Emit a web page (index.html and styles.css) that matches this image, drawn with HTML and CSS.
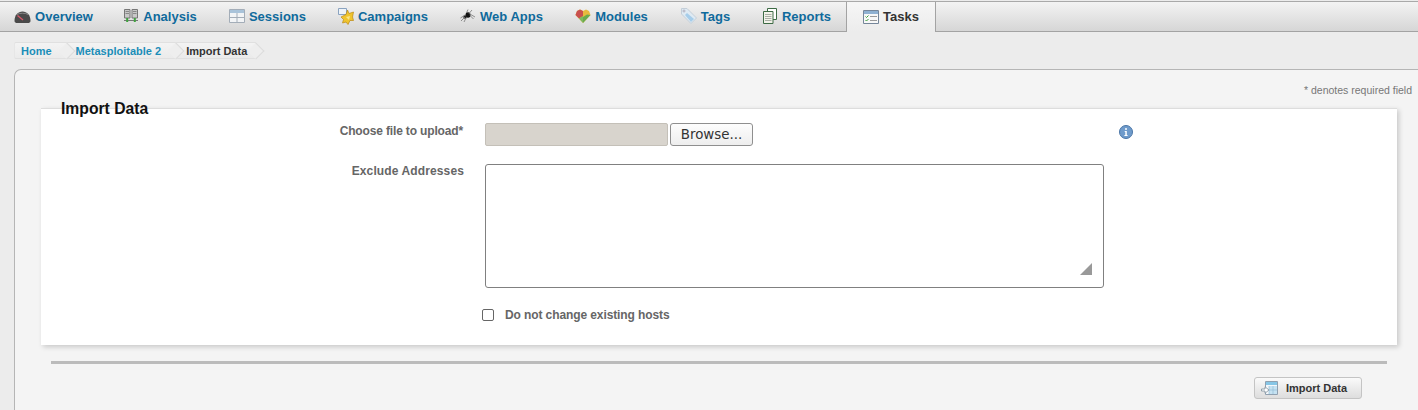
FILE: index.html
```html
<!DOCTYPE html>
<html lang="en">
<head>
    <meta charset="UTF-8">
    <meta name="viewport" content="width=device-width, initial-scale=1.0">
    <title>Import Data</title>

    <link rel="stylesheet" href="styles.css">
</head>
<body>
    <nav id="tabs">
        <a class="tab" style="width:107px"><svg width="17" height="16" viewBox="0 0 17 16"><path d="M0.500 13 C0.500 7 4 3.500 8.500 3.500 S16.500 7 16.500 13 C16.500 14.500 15 15 14 15 H3 C2 15 0.500 14.500 0.500 13 Z" fill="#4a4a4a"/><path d="M3 6.500 C5 4.800 12 4.800 14 6.500" stroke="#888" fill="none"/><path d="M3.500 7.500 L9 12" stroke="#d9576a" stroke-width="1.300"/></svg>Overview</a>
        <a class="tab" style="width:106px"><svg width="16" height="16" viewBox="0 0 16 16"><path d="M1.500 1.500h5.500v8.500H1.500zM9 1.500h5.500v8.500H9z" fill="#c8c8c8" stroke="#777"/><path d="M2.500 3.500h3.500M2.500 5.500h3.500M10 3.500h3.500M10 5.500h3.500" stroke="#888"/><path d="M1 12.500h14" stroke="#777"/><path d="M4.200 10v4M11.800 10v4" stroke="#3fa33f" stroke-width="2"/></svg>Analysis</a>
        <a class="tab" style="width:109px"><svg width="16" height="16" viewBox="0 0 16 16"><path d="M0.500 1.500h15v13H0.500z" fill="#f2f4f6" stroke="#a3adb8"/><path d="M1 2h14v3H1z" fill="#a9c3da"/><path d="M8 5v9.500M0.500 9.500h15" stroke="#a3adb8"/></svg>Sessions</a>
        <a class="tab" style="width:122px"><svg width="16" height="17" viewBox="0 0 16 17"><path d="M0.500 0.500h8v6h-8z" fill="#eef3f8" stroke="#8aa3c0"/><path d="M3 9 L8 6.500 L9.500 2 L11 5.500 L15.500 4 L14.500 9 L15.500 12.500 L12 12.500 L10 16.500 L8 14 L4.500 15 L5.500 11.500 Z" fill="#efc42e" stroke="#bb8a12" stroke-width="0.700"/><path d="M8 9 L12 8 L11 12 Z" fill="#f9e58a"/></svg>Campaigns</a>
        <a class="tab" style="width:115px"><svg width="16" height="16" viewBox="0 0 16 16"><ellipse cx="8" cy="7" rx="2.500" ry="2.800" fill="#111"/><circle cx="5" cy="9" r="1.700" fill="#222"/><path d="M0.500 10 L5 7 M1 13 L5 9 M4 14 L6 10 M8 1.500 L6.500 5 M12 2 L9 5.500 L15 9 M10 7.500 L13.500 11" stroke="#777" fill="none" stroke-width="0.800"/></svg>Web Apps</a>
        <a class="tab" style="width:105px"><svg width="16" height="16" viewBox="0 0 16 16"><path d="M8 15 L0.500 7 L2 3 L5 1.500 L8 3 L11 1.500 L14 3 L15.500 7 Z" fill="#e8b93e"/><path d="M0.500 7 L2 3 L5 1.500 L8 3 L8 8 L4 10.500 Z" fill="#c8504e"/><path d="M8 15 L8 9 L12 6.500 L15.500 7 Z" fill="#6aaa4e"/><path d="M8 15 L4 10.500 L8 8 Z" fill="#7cb860"/></svg>Modules</a>
        <a class="tab" style="width:83px"><svg width="16" height="16" viewBox="0 0 16 16"><path d="M0.500 0.500h5.500l9.500 9.500-5.500 5.500-9.500-9.500z" fill="#dfeaf3" stroke="#c3ced8"/><path d="M6 5l7 6-3 3-6-7z" fill="#a6cdea"/><circle cx="3" cy="3" r="1" fill="#fff" stroke="#aab"/></svg>Tags</a>
        <a class="tab" style="width:99px"><svg width="16" height="16" viewBox="0 0 16 16"><path d="M5.500 0.500h9v11h-9z" fill="#fff" stroke="#3d6b45"/><path d="M1.500 3.500h9.500v12H1.500z" fill="#f2f2ea" stroke="#3d6b45"/><path d="M3 6.500h6.500M3 8.500h6.500M3 10.500h6.500M3 12.500h6.500" stroke="#a9b0a6"/></svg>Reports</a>
        <a class="tab active" style="width:90px"><svg width="16" height="16" viewBox="0 0 16 16"><path d="M0.500 1.500h15v13H0.500z" fill="#f8f8f8" stroke="#75869a"/><path d="M1 2h14v3H1z" fill="#8fb1d2"/><path d="M2.500 7.500l1 1 2-2M2.500 11l1 1 2-2" stroke="#3aa03a" fill="none"/><path d="M7 7.500h7M7 11.500h7" stroke="#9a9a9a"/></svg>Tasks</a>
    </nav>

    <div id="crumbs">
        <a class="crumb">Home</a>
        <a class="crumb">Metasploitable 2</a>
        <span class="crumb current">Import Data</span>
    </div>

    <main id="panel">
        <p class="required">* denotes required field</p>

        <section class="fieldset">
            <h2>Import Data</h2>

            <div class="row file-row">
                <label class="choose">Choose file to upload*</label>
                <div class="file-field"></div>
                <button class="browse">Browse...</button>
                <svg class="info" width="14" height="14" viewBox="0 0 14 14"><circle cx="7" cy="7" r="6.500" fill="#6f9bcb" stroke="#4a75a6"/><circle cx="7" cy="3.900" r="1" fill="#fff"/><path d="M5.700 6h2.100v3.900h0.800v1.100H5.400V9.900h0.900V7H5.700z" fill="#fff"/></svg>
            </div>

            <div class="row">
                <label class="exclude">Exclude Addresses</label>
                <div class="textarea"><span class="grip"></span></div>
            </div>

            <div class="check-row">
                <span class="checkbox"></span>
                <label>Do not change existing hosts</label>
            </div>
        </section>

        <hr>

        <div class="actions">
            <button class="submit">
                <svg width="18" height="16" viewBox="0 0 18 16"><path d="M4.500 1.500h12v13h-12z" fill="#f4f7fa" stroke="#8fa0b0"/><path d="M5 2h11v3H5z" fill="#86c6e6"/><path d="M8 6h8v8H8z" fill="#c5e2f2"/><path d="M8 6v8M12 6v8M8 10h8" stroke="#8fb8d0" stroke-width="0.600"/><path d="M0.500 9h3.500V6.800l4 3.200-4 3.200V11H0.500z" fill="#fff" stroke="#7f8f9c" stroke-width="0.800"/></svg>
                Import Data
            </button>
        </div>
    </main>
</body>
</html>
```

FILE: styles.css
```css
* {
    box-sizing: border-box;
    font-family: "Liberation Sans", Arial, sans-serif;
}

html, body {
    height: 100%;
}

body {
    margin: 0;
    overflow: hidden;
    background-color: #ececec;
}

#tabs {
    display: flex;
    height: 31px;
    margin-top: 1px;
    border-top: 1px solid #a9a9a9;
    border-bottom: 1px solid #a3a3a3;
    background: linear-gradient(#f3f3f3, #d6d6d6);
}

.tab {
    display: flex;
    align-items: center;
    justify-content: center;
    gap: 4px;
    padding-bottom: 1px;
    font-size: 13px;
    font-weight: bold;
    color: #0f6a9c;
}

.tab.active {
    height: 30px;
    border-left: 1px solid #a3a3a3;
    border-right: 1px solid #a3a3a3;
    background: linear-gradient(#f6f6f6, #ececec);
    color: #333;
}

#crumbs {
    display: flex;
    height: 17px;
    margin: 10px 0 0 14px;
}

.crumb {
    position: relative;
    display: flex;
    align-items: center;
    padding: 0 15px 0 9px;
    border-top: 1px solid #e0e0e0;
    border-bottom: 1px solid #e0e0e0;
    background: linear-gradient(#f3f3f3, #ebebeb);
    font-size: 11px;
    font-weight: bold;
    color: #1a8db8;
}

.crumb:first-child {
    padding-left: 6px;
    border-left: 1px solid #e6e6e6;
    border-radius: 2px 0 0 2px;
}

.crumb::after {
    content: "";
    position: absolute;
    top: 2px;
    right: -6px;
    z-index: 1;
    width: 11px;
    height: 11px;
    border-top: 1px solid #dcdcdc;
    border-right: 1px solid #dcdcdc;
    background-color: #eeeeee;
    transform: rotate(45deg);
}

.crumb.current {
    padding: 0 9px 0 10px;
    color: #333;
}

#panel {
    height: 341px;
    margin: 10px 0 0 14px;
    padding: 0 6px 0 26px;
    border: 1px solid #b5b5b5;
    border-right: 0;
    border-bottom: 0;
    border-top-left-radius: 7px;
    background-color: #f4f4f4;
}

.required {
    margin: 14px 0 0;
    text-align: right;
    font-size: 10.500px;
    line-height: 12px;
    color: #777;
}

.fieldset {
    position: relative;
    height: 237px;
    margin: 12px 15px 0 0;
    padding-top: 14px;
    border-top: 1px solid #ddd;
    background-color: #fff;
    box-shadow: 2px 2px 5px rgba(0, 0, 0, 0.18);
}

.fieldset h2 {
    position: absolute;
    top: -9px;
    left: 20px;
    margin: 0;
    font-size: 15.700px;
    line-height: 18px;
    color: #111;
}

.row {
    display: flex;
}

.row label {
    width: 423px;
    text-align: right;
    font-size: 12px;
    font-weight: bold;
    line-height: 13px;
    color: #666;
}

.row .choose {
    padding-top: 2px;
    padding-right: 1px;
    letter-spacing: -0.15px;
}

.row .exclude {
    padding-top: 1px;
    letter-spacing: 0.12px;
}

.file-row {
    height: 41px;
}

.file-field {
    width: 183px;
    height: 23px;
    margin-left: 21px;
    border: 1px solid #c4c0b8;
    border-radius: 2px;
    background-color: #d8d4cd;
}

.browse {
    width: 83px;
    height: 23px;
    margin-left: 2px;
    padding: 0;
    border: 1px solid #8f8f8f;
    border-radius: 3px;
    background: linear-gradient(#fdfdfd, #eeeeee);
    font-family: "DejaVu Sans", sans-serif;
    font-size: 13.400px;
    color: #333;
}

.info {
    margin: 2px 0 0 366px;
}

.textarea {
    position: relative;
    width: 619px;
    height: 124px;
    margin-left: 21px;
    border: 1px solid #808080;
    border-radius: 3px;
    background-color: #fff;
}

.grip {
    position: absolute;
    right: 11px;
    bottom: 12px;
    border-style: solid;
    border-width: 0 0 12px 12px;
    border-color: transparent transparent #999 transparent;
}

.check-row {
    display: flex;
    align-items: center;
    gap: 11px;
    margin: 20px 0 0 441px;
}

.checkbox {
    width: 12px;
    height: 12px;
    border: 1px solid #666;
    border-radius: 2px;
    background-color: #fff;
}

.check-row label {
    font-size: 12px;
    font-weight: bold;
    letter-spacing: -0.1px;
    color: #666;
}

hr {
    height: 3px;
    margin: 16px 25px 0 10px;
    border: 0;
    background-color: #bbbbbb;
}

.actions {
    display: flex;
    justify-content: flex-end;
    margin: 13px 50px 0 0;
}

.submit {
    display: flex;
    align-items: center;
    gap: 7px;
    width: 108px;
    height: 22px;
    padding: 0 0 0 6px;
    border: 1px solid #c4c4c4;
    border-radius: 3px;
    background: linear-gradient(#fafafa, #dddddd);
    font-size: 11px;
    font-weight: bold;
    color: #333;
}
```
